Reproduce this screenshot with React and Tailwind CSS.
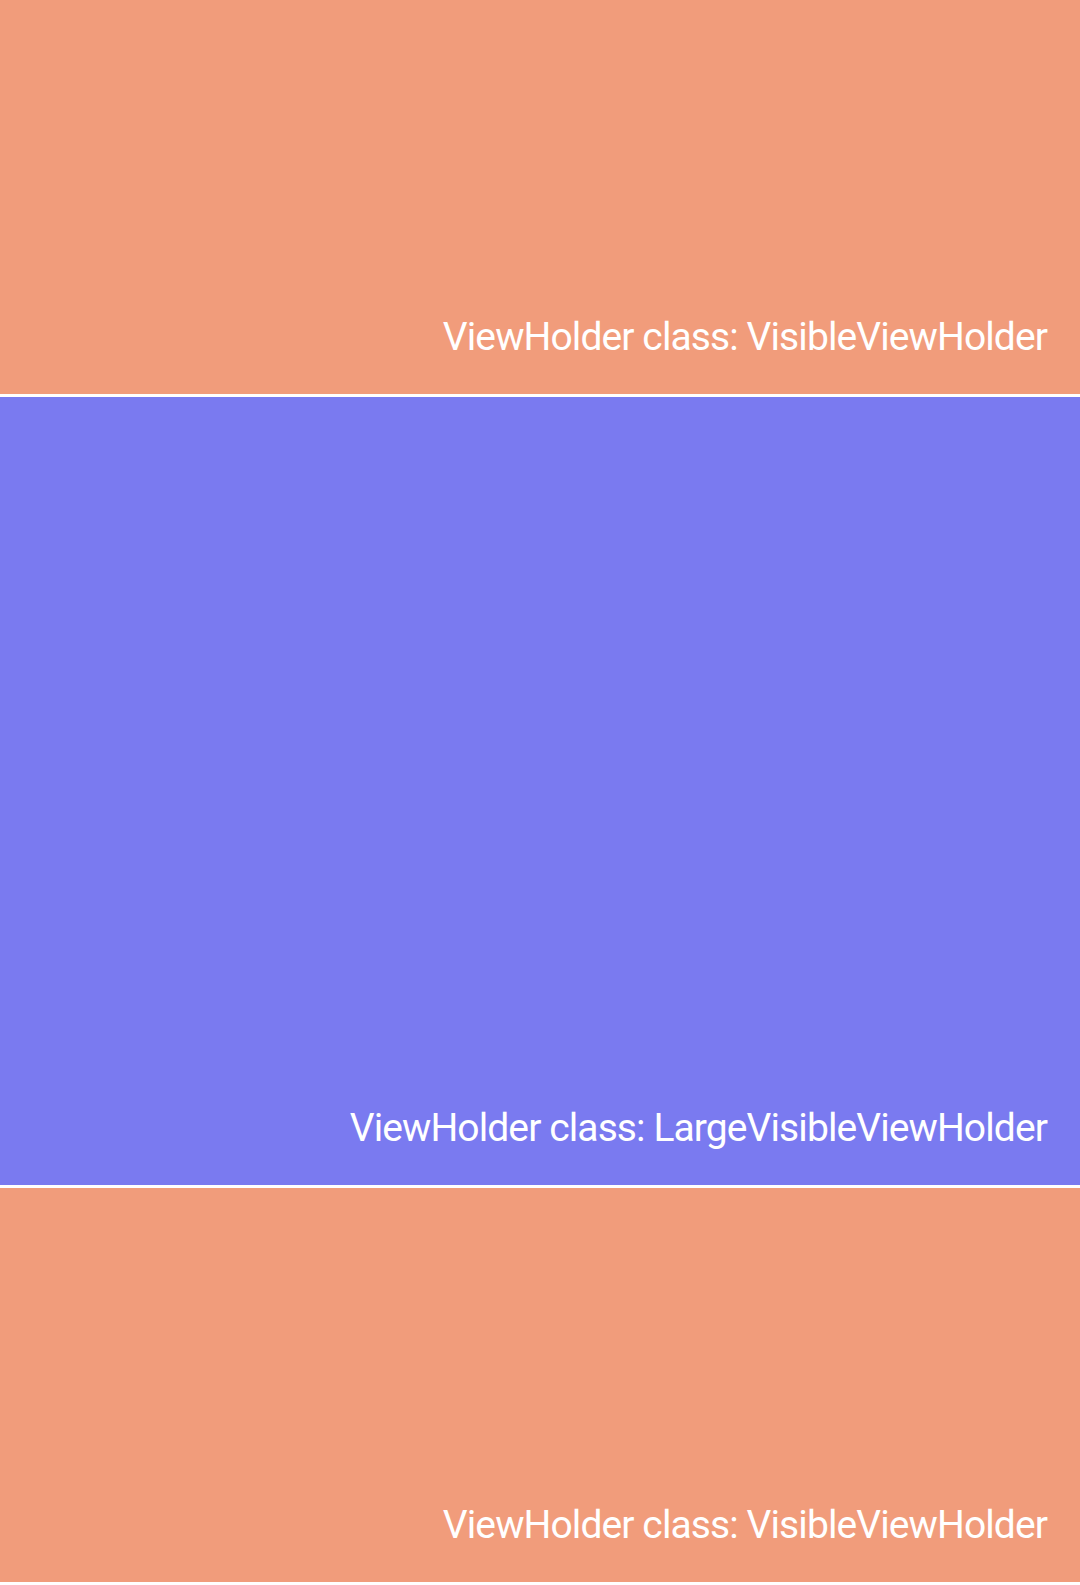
import React from 'react';

const items = [
	{ name: 'VisibleViewHolder', large: false },
	{ name: 'LargeVisibleViewHolder', large: true },
	{ name: 'VisibleViewHolder', large: false },
];

class App extends React.Component {
	render() {
		return (
			<div className="flex flex-col gap-[3px] bg-white min-h-[1585px]" style={{ fontFamily: 'Roboto, "Noto Sans", sans-serif' }}>
				{items.map((item, i) => (
					<div
						key={i}
						className={
							item.large
								? "flex items-end justify-end h-[788px] bg-[#7a7af0] pr-[33px] pb-[37px]"
								: "flex items-end justify-end h-[394px] bg-[#f19c7b] pr-[33px] pb-[37px]"
						}
					>
						<span className="text-white text-[39px] leading-none tracking-[-0.9px]">ViewHolder class: {item.name}</span>
					</div>
				))}
			</div>
		);
	}
}

export default App;
